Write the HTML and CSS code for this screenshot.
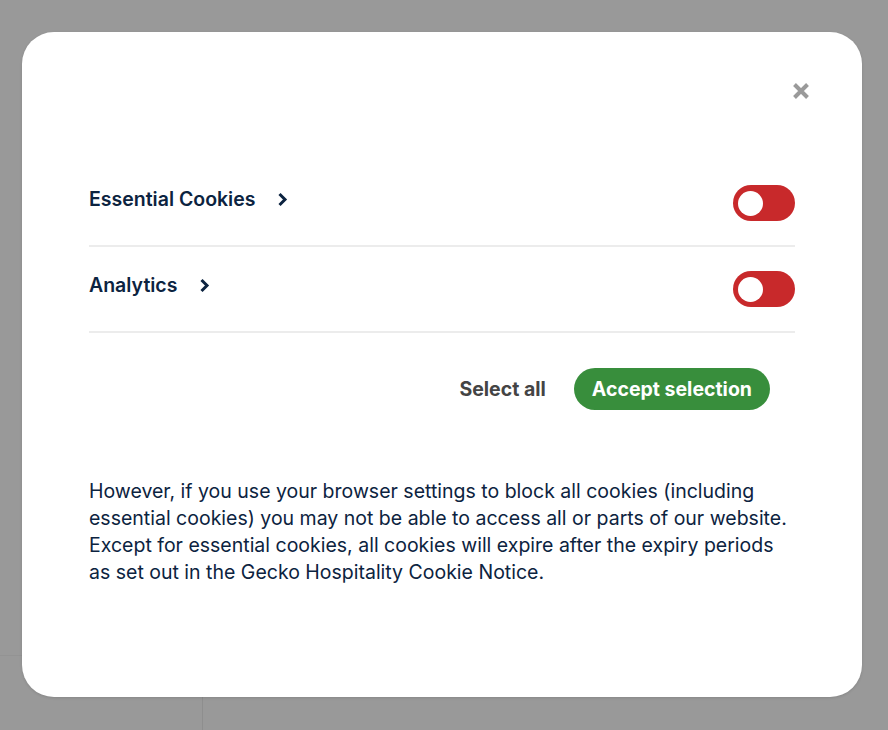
FILE: index.html
```html
<!DOCTYPE html>
<html lang="en">
<head>
<meta charset="utf-8">
<title>Cookie settings</title>
<link rel="stylesheet" href="styles.css">
</head>
<body>
<div class="page-bg"></div>
<div class="modal" role="dialog">
  <div class="modal-head">
    <button class="close" aria-label="Close">
      <svg width="18" height="18" viewBox="0 0 18 18"><path d="M2.5 2.5 L15.5 15.5 M15.5 2.5 L2.5 15.5" stroke="#9a9a9a" stroke-width="4" stroke-linecap="butt"/></svg>
    </button>
  </div>
  <div class="modal-body">
    <div class="row">
      <div class="row-title">Essential Cookies <span class="chev"><svg width="11" height="15" viewBox="0 0 11 15"><path d="M2.5 2 L8 7.5 L2.5 13" fill="none" stroke="#0c2340" stroke-width="3"/></svg></span></div>
      <span class="toggle"><span class="knob"></span></span>
    </div>
    <div class="row">
      <div class="row-title">Analytics <span class="chev"><svg width="11" height="15" viewBox="0 0 11 15"><path d="M2.5 2 L8 7.5 L2.5 13" fill="none" stroke="#0c2340" stroke-width="3"/></svg></span></div>
      <span class="toggle"><span class="knob"></span></span>
    </div>
    <div class="actions">
      <button class="btn-link">Select all</button>
      <button class="btn-primary">Accept selection</button>
    </div>
    <p class="note">However, if you use your browser settings to block all cookies (including essential cookies) you may not be able to access all or parts of our website. Except for essential cookies, all cookies will expire after the expiry periods as set out in the Gecko Hospitality Cookie Notice.</p>
  </div>
</div>
</body>
</html>
```
FILE: styles.css
```css
html, body {
  margin: 0;
  padding: 0;
}
body {
  background: #999999;
  font-family: Inter, "Noto Sans", sans-serif;
  width: 888px;
  height: 730px;
  overflow: hidden;
  position: relative;
}
.page-bg {
  position: absolute;
  left: 0;
  top: 655px;
  width: 202px;
  height: 100px;
  border-top: 1px solid #939393;
  border-right: 1px solid #8e8e8e;
}
.modal {
  position: relative;
  margin: 32px 26px 0 22px;
  height: 665px;
  background: #fff;
  border-radius: 32px;
  box-shadow: 0 1px 3px rgba(0,0,0,0.12);
}
.modal-head {
  height: 129px;
  display: flex;
  justify-content: flex-end;
  align-items: flex-start;
  padding: 50px 52px 0 0;
  box-sizing: border-box;
}
.close {
  border: 0;
  background: none;
  padding: 0;
  width: 18px;
  height: 18px;
  cursor: pointer;
}
.close svg { display: block; }
.modal-body {
  padding: 0 67px;
}
.row {
  height: 84px;
  border-bottom: 2px solid #ececec;
  display: flex;
  align-items: center;
  justify-content: space-between;
}
.row-title {
  font-size: 19.5px;
  font-weight: 600;
  color: #0c2340;
  display: flex;
  align-items: center;
  margin-top: -8px;
}
.chev {
  display: inline-flex;
  margin-left: 22px;
}
.toggle {
  width: 62px;
  height: 36px;
  border-radius: 18px;
  background: #c8292b;
  display: flex;
  align-items: center;
  padding-left: 5px;
  box-sizing: border-box;
}
.knob {
  width: 25px;
  height: 25px;
  border-radius: 50%;
  background: #fff;
}
.actions {
  display: flex;
  justify-content: flex-end;
  align-items: center;
  gap: 28px;
  margin-top: 35px;
  padding-right: 25px;
}
.btn-link {
  border: 0;
  background: none;
  font-family: inherit;
  font-size: 19.5px;
  font-weight: 700;
  color: #444;
  padding: 0;
}
.btn-primary {
  border: 0;
  background: #388e3c;
  color: #fff;
  font-family: inherit;
  font-size: 19.5px;
  font-weight: 700;
  height: 42px;
  padding: 0 18px;
  border-radius: 21px;
}
.note {
  margin: 68px 0 0;
  font-size: 19.5px;
  line-height: 27px;
  color: #0c2340;
}
```
